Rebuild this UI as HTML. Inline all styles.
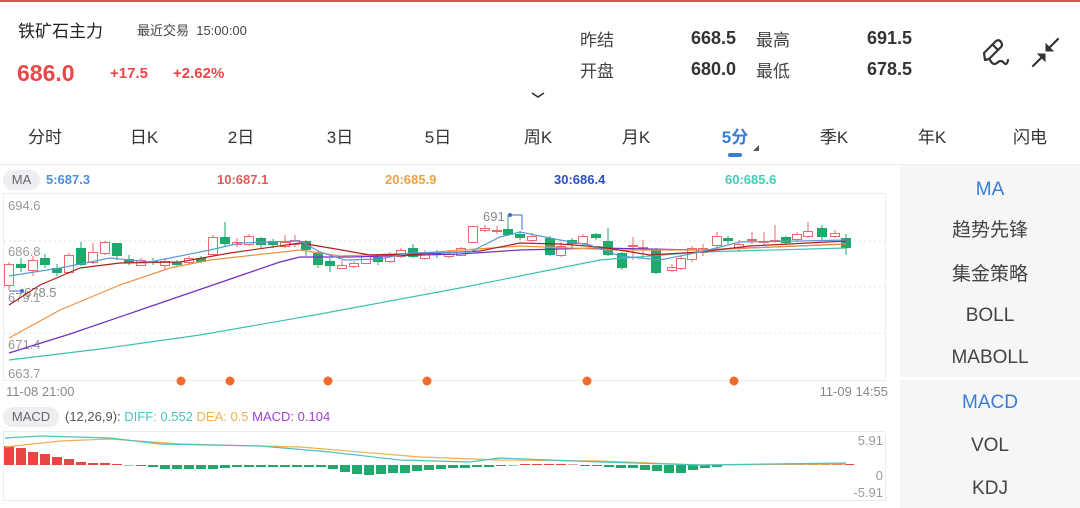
<!DOCTYPE html>
<html><head><meta charset="utf-8">
<style>
*{margin:0;padding:0;box-sizing:border-box}
body{width:1080px;height:508px;background:#fff;position:relative;overflow:hidden;font-family:"Liberation Sans","Noto Sans CJK SC",sans-serif;color:#333}
.a{position:absolute;white-space:nowrap}
.side{position:absolute;left:900px;width:180px;background:#f5f6f8}
.si{position:absolute;left:0;width:180px;text-align:center;font-size:19px;color:#444}
.tab{position:absolute;top:123px;font-size:17px;color:#333;transform:translateX(-50%)}
</style></head><body>
<div class="a" style="left:0;top:0;width:1080px;height:2px;background:#d9534f"></div>
<div class="a" style="left:18px;top:17px;font-size:17px;color:#222">铁矿石主力</div>
<div class="a" style="left:137px;top:20px;font-size:13px;color:#444">最近交易&nbsp; 15:00:00</div>
<div class="a" style="left:17px;top:60px;font-size:23px;font-weight:bold;color:#e8474a">686.0</div>
<div class="a" style="left:110px;top:65px;font-size:15px;font-weight:bold;color:#e8474a">+17.5</div>
<div class="a" style="left:173px;top:65px;font-size:15px;font-weight:bold;color:#e8474a">+2.62%</div>

<div class="a" style="left:580px;top:26px;font-size:17px;color:#444">昨结</div>
<div class="a" style="left:691px;top:28px;font-size:18px;font-weight:bold;color:#333">668.5</div>
<div class="a" style="left:756px;top:26px;font-size:17px;color:#444">最高</div>
<div class="a" style="left:867px;top:28px;font-size:18px;font-weight:bold;color:#333">691.5</div>
<div class="a" style="left:580px;top:57px;font-size:17px;color:#444">开盘</div>
<div class="a" style="left:691px;top:59px;font-size:18px;font-weight:bold;color:#333">680.0</div>
<div class="a" style="left:756px;top:57px;font-size:17px;color:#444">最低</div>
<div class="a" style="left:867px;top:59px;font-size:18px;font-weight:bold;color:#333">678.5</div>

<svg class="a" style="left:0;top:0" width="1080" height="160">
 <path d="M532 93 L538 97 L544 93" stroke="#333" stroke-width="1.6" fill="none"/>
 <g stroke="#333" stroke-width="2.2" fill="none" stroke-linecap="round" stroke-linejoin="round">
  <path d="M985 60 L984 53 L996 41 Q999 39 1001 42 Q1003 45 1001 47 L989 59 Z M993 45 L998 50"/>
  <path d="M990 60 Q993 66 997 63 Q1001 59 1004 63 Q1007 66 1008 60"/>
 </g>
 <g stroke="#333" stroke-width="2.2" fill="#333" stroke-linecap="round">
  <path d="M1058 39 L1050 47"/><path d="M1046 51 L1046 44 L1053 51 Z" stroke-width="1"/>
  <path d="M1033 66 L1041 58"/><path d="M1045 54 L1045 61 L1038 54 Z" stroke-width="1"/>
 </g>
 <rect x="728" y="153" width="14" height="4" rx="2" fill="#3a7bd5"/>
 <path d="M753 151 L759 145 L759 151 Z" fill="#555"/>
</svg>
<div class="tab" style="left:45px">分时</div>
<div class="tab" style="left:144px">日K</div>
<div class="tab" style="left:241px">2日</div>
<div class="tab" style="left:340px">3日</div>
<div class="tab" style="left:438px">5日</div>
<div class="tab" style="left:538px">周K</div>
<div class="tab" style="left:636px">月K</div>
<div class="tab" style="left:735px;color:#3a7bd5;font-weight:bold">5分</div>
<div class="tab" style="left:834px">季K</div>
<div class="tab" style="left:932px">年K</div>
<div class="tab" style="left:1030px">闪电</div>

<div class="a" style="left:0;top:164px;width:1080px;height:1px;background:#eee"></div>

<div class="a" style="left:3px;top:170px;width:37px;height:20px;border-radius:10px;background:#eceef1;font-size:13px;color:#666;text-align:center;line-height:20px">MA</div>
<div class="a" style="left:46px;top:172px;font-size:13px;font-weight:bold;color:#4a8fe0">5:687.3</div>
<div class="a" style="left:217px;top:172px;font-size:13px;font-weight:bold;color:#e05a5a">10:687.1</div>
<div class="a" style="left:385px;top:172px;font-size:13px;font-weight:bold;color:#f0a040">20:685.9</div>
<div class="a" style="left:554px;top:172px;font-size:13px;font-weight:bold;color:#2a4fc0">30:686.4</div>
<div class="a" style="left:725px;top:172px;font-size:13px;font-weight:bold;color:#3fd0b8">60:685.6</div>

<div class="a" style="left:3px;top:407px;width:56px;height:20px;border-radius:10px;background:#eceef1;font-size:13px;color:#666;text-align:center;line-height:20px">MACD</div>
<div class="a" style="left:65px;top:409px;font-size:13px"><span style="color:#555">(12,26,9): </span><span style="color:#4fc0c0">DIFF: 0.552 </span><span style="color:#f0b050">DEA: 0.5 </span><span style="color:#a040d0">MACD: 0.104</span></div>

<svg id="ch" class="a" style="left:0;top:0" width="900" height="508">
 <g stroke="#ececec" fill="none">
  <rect x="3.5" y="193.5" width="882" height="187"/>
  <path d="M4 241H885M4 287H885M4 333H885" stroke-dasharray="2 3" stroke="#e2e2e2"/>
  <rect x="3.5" y="431.5" width="882" height="69"/>
 </g>
 <g font-size="13" fill="#999" font-family="Liberation Sans,sans-serif">
  <text x="8" y="210">694.6</text>
  <text x="8" y="256">686.8</text>
  <text x="8" y="302">679.1</text>
  <text x="8" y="349">671.4</text>
  <text x="8" y="378">663.7</text>
  <text x="6" y="396" fill="#888">11-08 21:00</text>
  <text x="888" y="396" fill="#888" text-anchor="end">11-09 14:55</text>
  <text x="883" y="445" text-anchor="end">5.91</text>
  <text x="883" y="480" text-anchor="end">0</text>
  <text x="883" y="497" text-anchor="end">-5.91</text>
  <text x="24" y="297" fill="#888">678.5</text>
  <text x="483" y="221" fill="#888">691</text>
 </g>
 <path d="M9 291 H22" stroke="#3a6ad0"/><circle cx="22" cy="291" r="2" fill="#3a6ad0"/>
 <path d="M510 215 H522 V230" stroke="#3a6ad0" fill="none"/><circle cx="510" cy="215" r="2" fill="#3a6ad0"/>
 <g id="cd"></g>
 <g fill="none" stroke-width="1.2">
  <polyline stroke="#40c0b0" points="9,360 100,349 200,335 320,314 460,288 600,260 700,252 846,248"/>
  <polyline stroke="#7030c0" points="9,353 70,334 140,310 210,286 280,262 300,257 350,257 460,254 520,250 600,248 700,250 846,244"/>
  <polyline stroke="#f09040" points="9,338 60,310 120,285 170,268 210,260 300,250 340,256 420,253 520,246 620,250 700,250 846,244"/>
  <polyline stroke="#b02020" points="9,305 40,285 80,268 120,263 180,262 230,253 300,243 330,248 370,255 420,254 480,251 520,243 560,244 600,247 650,255 700,252 750,246 846,241"/>
  <polyline stroke="#5b9bd5" points="9,276 60,268 110,258 150,262 210,250 240,243 300,241 320,252 345,260 380,259 410,253 470,252 500,237 520,232 560,240 590,245 620,256 660,260 700,252 740,242 800,241 846,240"/>
 </g>
 <g fill="#f26b2c">
  <circle cx="181" cy="381" r="4.5"/><circle cx="230" cy="381" r="4.5"/><circle cx="328" cy="381" r="4.5"/><circle cx="427" cy="381" r="4.5"/><circle cx="587" cy="381" r="4.5"/><circle cx="734" cy="381" r="4.5"/>
 </g>
 <g id="hist"></g>
 <g fill="none" stroke-width="1.2">
  <polyline stroke="#f0b050" points="5,447 60,441 110,439 180,444 300,447 420,457 500,460 600,461 700,465 846,464"/>
  <polyline stroke="#4fc0c0" points="5,438 40,436 110,438 160,444 260,446 330,452 400,460 470,462 500,458 600,462 700,465 846,463"/>
 </g>
</svg>

<div class="side" style="top:165px;height:212px"></div>
<div class="side" style="top:380px;height:128px"></div>
<div class="si" style="left:900px;top:179px;color:#3a7bd5">MA</div>
<div class="si" style="left:900px;top:215px">趋势先锋</div>
<div class="si" style="left:900px;top:259px">集金策略</div>
<div class="si" style="left:900px;top:305px">BOLL</div>
<div class="si" style="left:900px;top:347px">MABOLL</div>
<div class="si" style="left:900px;top:392px;color:#3a7bd5">MACD</div>
<div class="si" style="left:900px;top:435px">VOL</div>
<div class="si" style="left:900px;top:478px">KDJ</div>

<script>
var R="#e86a6a",G="#1eaa6a";
var c=[[9,264,285,'r',262,290],[21,264,268,'g',258,272],[33,260,270,'r',256,276],[45,258,265,'g',254,268],[57,268,273,'g',264,276],[69,255,272,'r',253,274],[81,248,265,'g',242,266],[93,252,262,'r',243,264],[105,242,253,'r',241,255],[117,243,256,'g',243,260],[129,259,263,'g',255,265],[141,260,265,'r',258,266],[153,261,263,'g',258,265],[165,261,265,'r',258,270],[177,262,265,'g',260,266],[189,258,262,'r',256,264],[201,258,262,'g',256,263],[213,237,254,'r',235,256],[225,237,244,'g',222,246],[237,242,244,'r',238,247],[249,236,244,'r',234,246],[261,238,245,'g',237,248],[273,241,245,'g',239,248],[285,242,246,'r',235,248],[295,240,244,'r',235,247],[306,241,250,'g',240,256],[318,253,265,'g',250,268],[330,261,266,'g',258,272],[342,265,268,'r',260,268],[354,263,266,'r',261,268],[366,256,263,'r',255,264],[378,257,262,'g',254,265],[390,254,261,'r',252,263],[401,250,256,'r',248,258],[413,248,257,'g',244,258],[425,253,258,'r',250,260],[437,253,255,'g',250,258],[449,254,256,'r',250,258],[461,248,255,'r',247,256],[473,226,242,'r',226,243],[485,228,230,'r',225,232],[497,230,231,'r',226,234],[508,229,235,'g',215,236],[520,234,238,'g',231,240],[532,236,240,'r',233,242],[550,238,255,'g',236,256],[561,246,255,'r',242,257],[572,240,244,'g',238,248],[583,236,243,'r',234,245],[596,234,238,'g',233,240],[608,241,255,'g',228,256],[622,253,268,'g',252,270],[633,245,246,'r',237,260],[643,247,248,'r',240,258],[656,249,273,'g',248,274],[672,267,270,'r',264,272],[681,258,268,'r',256,270],[692,248,259,'r',246,262],[703,248,252,'r',244,256],[717,236,245,'r',232,248],[728,238,241,'g',236,244],[739,244,247,'r',240,252],[752,239,240,'r',232,244],[764,241,242,'r',232,245],[775,240,241,'r',225,243],[786,237,243,'g',236,245],[797,234,239,'r',232,242],[808,231,236,'r',222,238],[822,228,237,'g',225,240],[835,233,236,'r',230,238],[846,238,248,'g',234,255]];
var g=document.getElementById("cd"),s="";
c.forEach(function(k){var col=k[3]=='r'?R:G;
s+='<line x1="'+k[0]+'" x2="'+k[0]+'" y1="'+k[4]+'" y2="'+k[5]+'" stroke="'+col+'"/>';
var h=Math.max(1,k[2]-k[1]);
if(k[3]=='r')s+='<rect x="'+(k[0]-4.5)+'" y="'+k[1]+'.5" width="9" height="'+h+'" fill="#fff" stroke="'+col+'"/>';
else s+='<rect x="'+(k[0]-5)+'" y="'+k[1]+'" width="10" height="'+h+'" fill="'+col+'"/>';});
g.innerHTML=s;
var v=[19,17,13,11,8,6,3,2,2,1,-0.5,-1,-2,-4,-4,-4,-4,-4,-3,-2,-2,-2,-2,-2,-2,-2,-2,-4,-7,-9,-10,-9,-8,-8,-6,-5,-4,-3,-3,-2,-2,-1,-0.5,1,1,1,1,0.5,-1,-1,-2,-3,-3,-5,-6,-8,-8,-5,-3,-2,-0.5,1,1,1,1,1,1,1,1,1,1];
var hs="";v.forEach(function(x,i){var X=4+i*12,z=465;
if(x>0)hs+='<rect x="'+X+'" y="'+(z-x)+'" width="10" height="'+x+'" fill="#e84545"/>';
else hs+='<rect x="'+X+'" y="'+z+'" width="10" height="'+(-x)+'" fill="#1eaa6a"/>';});
document.getElementById("hist").innerHTML=hs;
</script>
</body></html>
